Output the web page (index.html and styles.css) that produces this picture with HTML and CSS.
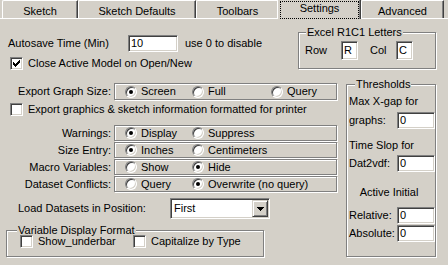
FILE: index.html
```html
<!DOCTYPE html>
<html>
<head>
    <title>Settings</title>
    <link rel="stylesheet" href="styles.css">
</head>
<body>
    <div class="tabs">
        <div class="tab tab-sketch">Sketch</div>
        <div class="tab tab-defaults">Sketch Defaults</div>
        <div class="tab tab-toolbars">Toolbars</div>
        <div class="tab tab-settings"><div class="focus">Settings</div></div>
        <div class="tab tab-advanced">Advanced</div>
    </div>
    <div class="panel">
        <div class="top">
            <div class="top-left">
                <div class="autosave">
                    <span class="autosave-label">Autosave Time (Min)</span>
                    <div class="field autosave-field">10</div>
                    <span class="hint">use 0 to disable</span>
                </div>
                <div class="check close-check">
                    <span class="box"><svg width="7" height="7" viewBox="0 0 7 7" shape-rendering="crispEdges"><path d="M0 2h1v3h-1z M1 3h1v3h-1z M2 4h1v3h-1z M3 3h1v3h-1z M4 2h1v3h-1z M5 1h1v3h-1z M6 0h1v3h-1z" fill="#000"/></svg></span>
                    <span>Close Active Model on Open/New</span>
                </div>
            </div>
            <fieldset class="group excel">
                <legend>Excel R1C1 Letters</legend>
                <div class="excel-row">
                    <span class="excel-row-label">Row</span>
                    <div class="field letter">R</div>
                    <span class="excel-col-label">Col</span>
                    <div class="field letter">C</div>
                </div>
            </fieldset>
        </div>
        <div class="main">
            <div class="main-left">
                <div class="optrow graph-row">
                    <span class="optlabel">Export Graph Size:</span>
                    <div class="optbox">
                        <span class="opt"><span class="radio on"></span>Screen</span>
                        <span class="opt"><span class="radio"></span>Full</span>
                        <span class="opt"><span class="radio"></span>Query</span>
                    </div>
                </div>
                <div class="check export-check">
                    <span class="box"></span>
                    <span>Export graphics &amp; sketch information formatted for printer</span>
                </div>
                <div class="options">
                    <div class="optrow">
                        <span class="optlabel">Warnings:</span>
                        <div class="optbox">
                            <span class="opt"><span class="radio on"></span>Display</span>
                            <span class="opt"><span class="radio"></span>Suppress</span>
                        </div>
                    </div>
                    <div class="optrow">
                        <span class="optlabel">Size Entry:</span>
                        <div class="optbox">
                            <span class="opt"><span class="radio on"></span>Inches</span>
                            <span class="opt"><span class="radio"></span>Centimeters</span>
                        </div>
                    </div>
                    <div class="optrow">
                        <span class="optlabel">Macro Variables:</span>
                        <div class="optbox">
                            <span class="opt"><span class="radio"></span>Show</span>
                            <span class="opt"><span class="radio on"></span>Hide</span>
                        </div>
                    </div>
                    <div class="optrow">
                        <span class="optlabel">Dataset Conflicts:</span>
                        <div class="optbox">
                            <span class="opt"><span class="radio"></span>Query</span>
                            <span class="opt"><span class="radio on"></span>Overwrite (no query)</span>
                        </div>
                    </div>
                </div>
                <div class="load">
                    <span class="load-label">Load Datasets in Position:</span>
                    <div class="select">
                        <span class="select-value">First</span>
                        <span class="select-button"><svg width="7" height="4" viewBox="0 0 7 4" shape-rendering="crispEdges"><path d="M0 0h7v1h-7z M1 1h5v1h-5z M2 2h3v1h-3z M3 3h1v1h-1z" fill="#000"/></svg></span>
                    </div>
                </div>
                <fieldset class="group vdf">
                    <legend>Variable Display Format</legend>
                    <div class="vdf-row">
                        <div class="check vdf-first"><span class="box"></span><span>Show_underbar</span></div>
                        <div class="check"><span class="box"></span><span>Capitalize by Type</span></div>
                    </div>
                </fieldset>
            </div>
            <fieldset class="group thresholds">
                <legend>Thresholds</legend>
                <div class="th-max">Max X-gap for</div>
                <div class="th-row th-graphs">
                    <span class="th-label">graphs:</span>
                    <div class="field th-field">0</div>
                </div>
                <div class="th-slop">Time Slop for</div>
                <div class="th-row th-dat">
                    <span class="th-label">Dat2vdf:</span>
                    <div class="field th-field">0</div>
                </div>
                <div class="th-active">Active Initial</div>
                <div class="th-row th-rel">
                    <span class="th-label">Relative:</span>
                    <div class="field th-field">0</div>
                </div>
                <div class="th-row th-abs">
                    <span class="th-label">Absolute:</span>
                    <div class="field th-field">0</div>
                </div>
            </fieldset>
        </div>
    </div>
</body>
</html>
```

FILE: styles.css
```css
body {
    margin: 0;
    width: 448px;
    height: 265px;
    overflow: hidden;
    background-color: #d4d0c8;
    color: #000;
    font-family: "Liberation Sans", Arial, sans-serif;
    font-size: 11px;
    line-height: 13px;
}

/* tab strip */
.tabs {
    display: flex;
    height: 18px;
    padding-left: 2px;
}
.tab {
    box-sizing: border-box;
    height: 18px;
    padding-top: 4px;
    text-align: center;
    white-space: nowrap;
    border-top: 1px solid #fff;
    border-left: 1px solid #fff;
    border-right: 1px solid #404040;
    border-top-left-radius: 2px;
    box-shadow: inset -1px 0 #808080;
}
.tab-sketch { width: 76px; }
.tab-defaults { width: 118px; }
.tab-toolbars { width: 83px; }
.tab-advanced { width: 83px; }
.tab-settings {
    width: 84px;
    height: 21px;
    margin-left: -2px;
    margin-top: -2px;
    padding-top: 0;
    position: relative;
    z-index: 1;
    background-color: #d4d0c8;
}
.focus {
    box-sizing: border-box;
    height: 18px;
    margin: 2px 1px 0 2px;
    border: 1px dotted #000;
}

.panel {
    border-top: 1px solid #fff;
}

/* shared controls */
.field {
    box-sizing: border-box;
    background-color: #fff;
    border: 1px solid;
    border-color: #808080 #fff #fff #808080;
    box-shadow: inset 1px 1px #404040, inset -1px -1px #d4d0c8;
    padding-left: 2px;
}
.check {
    display: flex;
    align-items: center;
    height: 13px;
    white-space: nowrap;
}
.box {
    box-sizing: border-box;
    flex-shrink: 0;
    width: 13px;
    height: 13px;
    margin-right: 5px;
    display: flex;
    align-items: center;
    justify-content: center;
    background-color: #fff;
    border: 1px solid;
    border-color: #808080 #fff #fff #808080;
    box-shadow: inset 1px 1px #404040, inset -1px -1px #d4d0c8;
}
.radio {
    box-sizing: border-box;
    flex-shrink: 0;
    width: 12px;
    height: 12px;
    margin-right: 4px;
    display: flex;
    align-items: center;
    justify-content: center;
    border-radius: 50%;
    background-color: #fff;
    border: 1px solid;
    border-color: #808080 #fff #fff #808080;
    box-shadow: inset 1px 1px #404040, inset -1px -1px #d4d0c8;
}
.radio.on::after {
    content: "";
    width: 4px;
    height: 4px;
    border-radius: 50%;
    background-color: #000;
}
.group {
    margin: 0;
    min-width: 0;
    box-sizing: border-box;
    border: 1px solid #808080;
    box-shadow: inset 1px 1px #fff, 1px 1px #fff;
}
.group legend {
    padding: 0 1px;
    background-color: #d4d0c8;
}

/* top area */
.top {
    display: flex;
    align-items: flex-start;
}
.top-left {
    padding: 16px 0 0 8px;
}
.autosave {
    display: flex;
    align-items: center;
}
.autosave-label {
    width: 120px;
}
.autosave-field {
    width: 50px;
    height: 17px;
    line-height: 15px;
}
.hint {
    margin-left: 7px;
}
.close-check {
    margin: 5px 0 0 2px;
}
.excel {
    width: 138px;
    margin: 7px 12px 0 auto;
    padding: 0 6px 8px;
}
.excel legend {
    margin-left: 1px;
}
.excel-row {
    display: flex;
    align-items: center;
    margin-top: 2px;
}
.excel-row-label {
    width: 36px;
}
.excel-col-label {
    width: 26px;
    margin-left: 12px;
}
.letter {
    width: 17px;
    height: 19px;
    line-height: 17px;
}

/* main area */
.main {
    display: flex;
    align-items: flex-start;
    margin-top: 8px;
}
.main-left {
    width: 346px;
    display: flex;
    flex-direction: column;
    align-items: flex-start;
}
.optrow {
    display: flex;
    align-items: center;
}
.optlabel {
    width: 111px;
    margin-right: 3px;
    text-align: right;
}
.optbox {
    box-sizing: border-box;
    width: 223px;
    height: 16px;
    padding-left: 10px;
    display: grid;
    grid-template-columns: 67px 79px auto;
    align-items: center;
    border: 1px solid #808080;
    box-shadow: inset 1px 1px #fff, 1px 1px #fff;
}
.opt {
    display: flex;
    align-items: center;
    white-space: nowrap;
}
.graph-row {
    margin-top: 5px;
}
.graph-row .optbox {
    height: 17px;
}
.export-check {
    margin: 3px 0 0 10px;
}
.options {
    margin-top: 9px;
    display: flex;
    flex-direction: column;
    gap: 1px;
}
.load {
    display: flex;
    align-items: center;
    margin-top: 6px;
    padding-left: 18px;
}
.load-label {
    width: 152px;
}
.select {
    box-sizing: border-box;
    width: 100px;
    height: 21px;
    padding: 1px;
    display: flex;
    align-items: center;
    background-color: #fff;
    border: 1px solid;
    border-color: #808080 #fff #fff #808080;
    box-shadow: inset 1px 1px #404040, inset -1px -1px #d4d0c8;
}
.select-value {
    flex: 1;
    padding-left: 2px;
}
.select-button {
    box-sizing: border-box;
    width: 16px;
    height: 17px;
    display: flex;
    align-items: center;
    justify-content: center;
    background-color: #d4d0c8;
    border: 1px solid;
    border-color: #d4d0c8 #404040 #404040 #d4d0c8;
    box-shadow: inset 1px 1px #fff, inset -1px -1px #808080;
}
.vdf {
    width: 258px;
    margin: 5px 0 0 6px;
    padding: 0 0 8px 10px;
}
.vdf-row {
    display: flex;
    margin: -2px 0 0 3px;
}
.vdf-first {
    width: 113px;
}

/* thresholds */
.thresholds {
    width: 90px;
    padding: 0 0 14px 2px;
}
.thresholds legend {
    margin-left: 6px;
}
.th-row {
    display: flex;
    align-items: center;
}
.th-label {
    width: 48px;
}
.th-field {
    width: 38px;
    height: 17px;
    line-height: 15px;
}
.th-max { margin-top: 4px; }
.th-graphs { margin-top: 4px; }
.th-slop { margin-top: 10px; }
.th-dat { margin-top: 3px; }
.th-active {
    margin-top: 14px;
    padding-right: 6px;
    text-align: center;
}
.th-rel { margin-top: 8px; }
.th-abs { margin-top: 1px; }
```
